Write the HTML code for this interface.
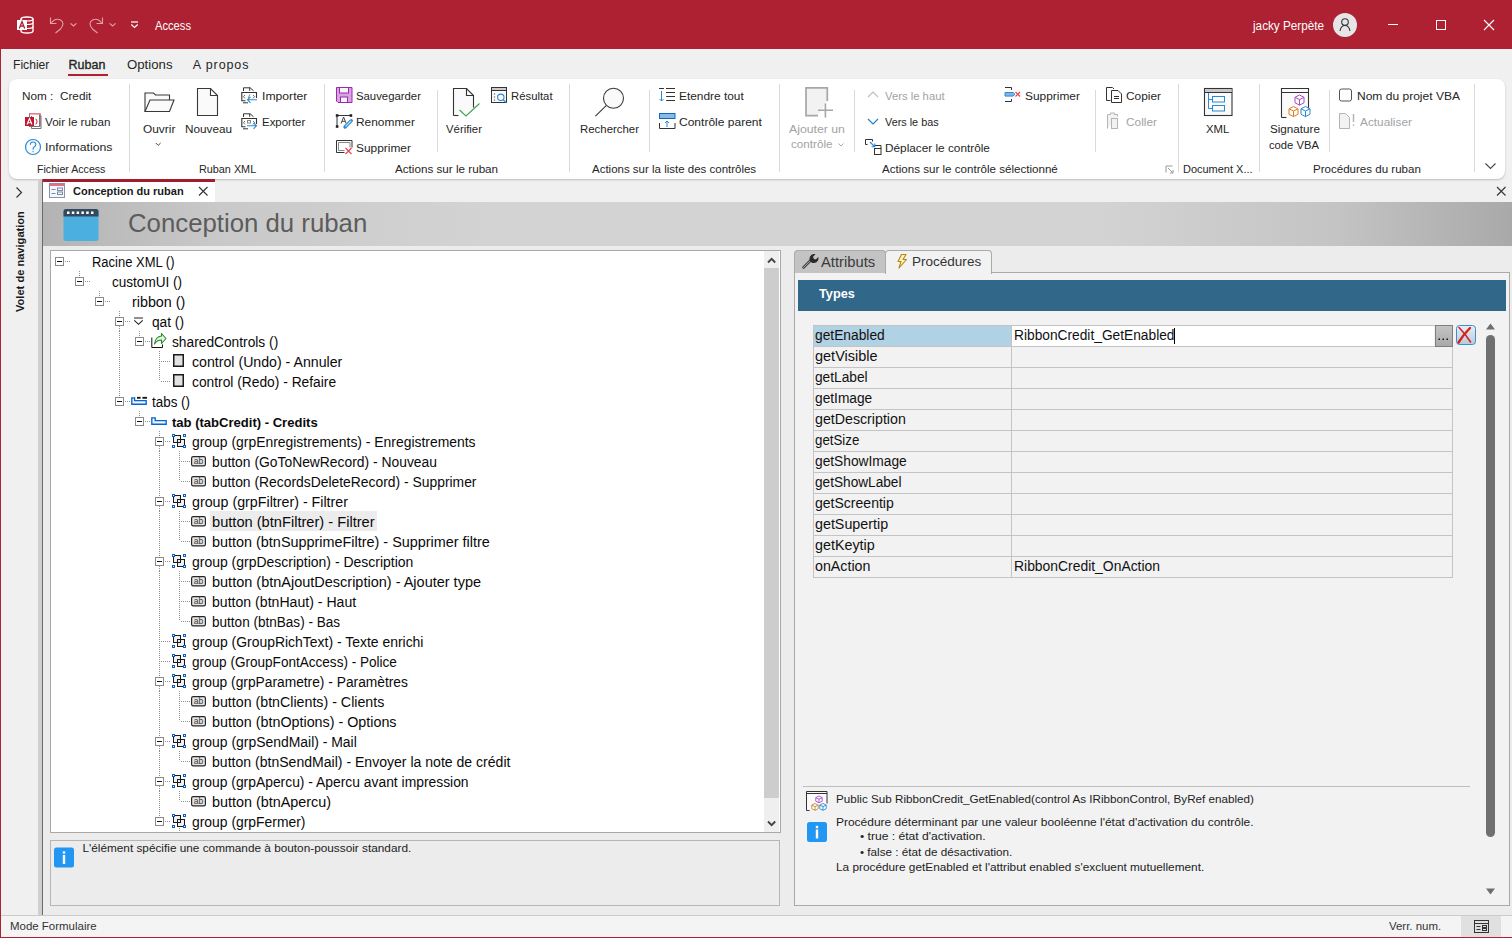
<!DOCTYPE html>
<html><head><meta charset="utf-8">
<style>
*{margin:0;padding:0;box-sizing:border-box}
html,body{width:1512px;height:938px;overflow:hidden;background:#f0f0f0;font-family:"Liberation Sans",sans-serif;color:#262626}
body{position:relative}
.a{position:absolute;white-space:nowrap;line-height:1}
svg{position:absolute;overflow:visible}
#title{left:0;top:0;width:1512px;height:49px;background:#ad2132}
.rt{font-size:12.5px;color:#262626;top:59px}
#ribbon{left:9px;top:79px;width:1496px;height:100px;background:#fff;border-radius:8px;box-shadow:0 1px 2px rgba(0,0,0,.22)}
.r{font-size:11.7px;color:#262626}
.gl{font-size:11.7px;color:#262626;top:162px}
.sep{position:absolute;width:1px;background:#dadada}
.dis{color:#a3a3a3}
.tr{position:absolute;font-size:14px;color:#0a0a0a;white-space:nowrap;line-height:1}
</style></head><body>
<!-- TITLE BAR -->
<div id="title" class="a"></div>
<div class="a" style="left:155px;top:19.5px;font-size:12px;color:#fff;transform:scaleX(0.931);transform-origin:0 0">Access</div>
<div class="a" style="left:1253px;top:19.5px;font-size:12px;color:#fff;transform:scaleX(0.977);transform-origin:0 0">jacky Perpète</div>
<div class="a" style="left:1333px;top:13px;width:24px;height:24px;border-radius:50%;background:#e6e6e6"></div>
<div class="a" style="left:1388px;top:24px;width:10px;height:1px;background:#fff"></div>
<div class="a" style="left:1436px;top:20px;width:10px;height:10px;border:1px solid #fff"></div>
<!-- left red border & bottom -->
<div class="a" style="left:0;top:49px;width:1px;height:889px;background:#ad2132"></div>
<div class="a" style="left:0;top:937px;width:1512px;height:1px;background:#ad2132"></div>
<!-- TABS -->
<div class="a rt" style="left:13px;transform:scaleX(.97);transform-origin:0 0">Fichier</div>
<div class="a rt" style="left:68.5px;transform:scaleX(1.0);transform-origin:0 0;-webkit-text-stroke:.35px #262626">Ruban</div>
<div class="a" style="left:68px;top:74px;width:40px;height:2px;background:#ad2132"></div>
<div class="a rt" style="left:127.3px;transform:scaleX(1.056);transform-origin:0 0">Options</div>
<div class="a rt" style="left:192.8px;letter-spacing:.9px">A propos</div>
<!-- RIBBON -->
<div id="ribbon" class="a"></div>
<!--RTEXT-->
<div class="a r " style="left:21.5px;top:89.9px;transform:scaleX(1.007);transform-origin:0 0">Nom :&nbsp; Credit</div>
<div class="a r " style="left:44.8px;top:115.8px;transform:scaleX(0.997);transform-origin:0 0">Voir le ruban</div>
<div class="a r " style="left:45.4px;top:141.4px;transform:scaleX(1.049);transform-origin:0 0">Informations</div>
<div class="a r " style="left:36.7px;top:162.5px;transform:scaleX(0.908);transform-origin:0 0">Fichier Access</div>
<div class="a r " style="left:142.6px;top:122.6px;transform:scaleX(1.017);transform-origin:0 0">Ouvrir</div>
<div class="a r " style="left:184.5px;top:122.6px;transform:scaleX(1.006);transform-origin:0 0">Nouveau</div>
<div class="a r " style="left:261.6px;top:89.9px;transform:scaleX(1.042);transform-origin:0 0">Importer</div>
<div class="a r " style="left:261.6px;top:115.7px;transform:scaleX(0.979);transform-origin:0 0">Exporter</div>
<div class="a r " style="left:198.5px;top:162.7px;transform:scaleX(0.926);transform-origin:0 0">Ruban XML</div>
<div class="a r " style="left:356px;top:90.1px;transform:scaleX(0.970);transform-origin:0 0">Sauvegarder</div>
<div class="a r " style="left:356px;top:116.1px;transform:scaleX(1.020);transform-origin:0 0">Renommer</div>
<div class="a r " style="left:356px;top:142.1px;transform:scaleX(1.019);transform-origin:0 0">Supprimer</div>
<div class="a r " style="left:446px;top:122.6px;transform:scaleX(0.971);transform-origin:0 0">Vérifier</div>
<div class="a r " style="left:511px;top:90.1px;transform:scaleX(0.969);transform-origin:0 0">Résultat</div>
<div class="a r " style="left:394.7px;top:162.5px;transform:scaleX(0.998);transform-origin:0 0">Actions sur le ruban</div>
<div class="a r " style="left:580px;top:122.6px;transform:scaleX(0.976);transform-origin:0 0">Rechercher</div>
<div class="a r " style="left:679px;top:89.9px;transform:scaleX(1.017);transform-origin:0 0">Etendre tout</div>
<div class="a r " style="left:679px;top:115.7px;transform:scaleX(1.029);transform-origin:0 0">Contrôle parent</div>
<div class="a r " style="left:592.3px;top:162.5px;transform:scaleX(0.983);transform-origin:0 0">Actions sur la liste des contrôles</div>
<div class="a r dis" style="left:789px;top:122.6px;transform:scaleX(1.050);transform-origin:0 0">Ajouter un</div>
<div class="a r dis" style="left:790.5px;top:138.3px;transform:scaleX(0.997);transform-origin:0 0">contrôle</div>
<div class="a r dis" style="left:885px;top:90.1px;transform:scaleX(0.965);transform-origin:0 0">Vers le haut</div>
<div class="a r " style="left:885px;top:115.7px;transform:scaleX(0.928);transform-origin:0 0">Vers le bas</div>
<div class="a r " style="left:885px;top:142.1px;transform:scaleX(1.009);transform-origin:0 0">Déplacer le contrôle</div>
<div class="a r " style="left:1025px;top:90.1px;transform:scaleX(1.019);transform-origin:0 0">Supprimer</div>
<div class="a r " style="left:882px;top:162.5px;transform:scaleX(0.991);transform-origin:0 0">Actions sur le contrôle sélectionné</div>
<div class="a r " style="left:1126px;top:90.1px;transform:scaleX(1.016);transform-origin:0 0">Copier</div>
<div class="a r dis" style="left:1126px;top:116.1px;transform:scaleX(1.014);transform-origin:0 0">Coller</div>
<div class="a r " style="left:1205.7px;top:123.0px;transform:scaleX(0.969);transform-origin:0 0">XML</div>
<div class="a r " style="left:1183.4px;top:162.5px;transform:scaleX(0.939);transform-origin:0 0">Document X...</div>
<div class="a r " style="left:1270px;top:123.0px;transform:scaleX(0.998);transform-origin:0 0">Signature</div>
<div class="a r " style="left:1269.4px;top:138.7px;transform:scaleX(0.961);transform-origin:0 0">code VBA</div>
<div class="a r " style="left:1357px;top:90.1px;transform:scaleX(1.029);transform-origin:0 0">Nom du projet VBA</div>
<div class="a r dis" style="left:1360px;top:116.1px;transform:scaleX(1.012);transform-origin:0 0">Actualiser</div>
<div class="a r " style="left:1312.9px;top:162.5px;transform:scaleX(0.988);transform-origin:0 0">Procédures du ruban</div>
<div class="sep" style="left:129px;top:84px;height:88px"></div>
<div class="sep" style="left:324px;top:84px;height:88px"></div>
<div class="sep" style="left:437px;top:90px;height:62px"></div>
<div class="sep" style="left:569px;top:84px;height:88px"></div>
<div class="sep" style="left:649px;top:90px;height:62px"></div>
<div class="sep" style="left:779px;top:84px;height:88px"></div>
<div class="sep" style="left:854px;top:90px;height:62px"></div>
<div class="sep" style="left:1095px;top:90px;height:62px"></div>
<div class="sep" style="left:1178px;top:84px;height:88px"></div>
<div class="sep" style="left:1259px;top:84px;height:88px"></div>
<div class="sep" style="left:1329px;top:90px;height:62px"></div>
<div class="sep" style="left:1474px;top:84px;height:88px"></div>
<!--/RTEXT-->
<svg style="left:0;top:0" width="1512" height="938" viewBox="0 0 1512 938">
<!-- title bar: access logo -->
<g>
 <path d="M21 19 v12 q0 2 6 2 q6 0 6-2 v-12 q0-2-6-2 q-6 0-6 2z" fill="none" stroke="#fff" stroke-width="1.4"/>
 <path d="M21 22.5 q0 2 6 2 q6 0 6-2 M21 26.5 q0 2 6 2 q6 0 6-2 M21 19 q0 2 6 2 q6 0 6-2" fill="none" stroke="#fff" stroke-width="1.2"/>
 <rect x="17" y="20" width="10" height="10" fill="#fff"/>
 <path d="M19.3 28.5 L22 21.5 L24.7 28.5 M20.4 26 h3.2" stroke="#ad2132" stroke-width="1.3" fill="none"/>
</g>
<!-- undo / redo -->
<g stroke="#e4a0aa" stroke-width="1.1" fill="none">
 <path d="M50.5 17.5 v6 h6"/>
 <path d="M51 23.5 q4-6 9.5-3.5 q5 3 0 9 l-5 4"/>
 <path d="M70.5 23.3 l3 2.7 l3-2.7"/>
 <path d="M102.5 17.5 v6 h-6"/>
 <path d="M102 23.5 q-4-6 -9.5-3.5 q-5 3 0 9 l5 4"/>
 <path d="M109.6 23.3 l3 2.7 l3-2.7"/>
</g>
<g stroke="#fff" stroke-width="1.2" fill="none">
 <path d="M131 22 h7"/>
 <path d="M131.3 24.5 l3.2 3 l3.2-3"/>
</g>
<!-- avatar person -->
<g stroke="#333" stroke-width="1.1" fill="none">
 <circle cx="1345" cy="22" r="3.3"/>
 <path d="M1340 31 q1-5.5 5-5.5 q4 0 5 5.5"/>
</g>
<!-- close X -->
<path d="M1484 20 l10 10 M1494 20 l-10 10" stroke="#fff" stroke-width="1.1"/>

<!-- Voir le ruban -->
<g>
 <path d="M31.5 113.5 h9 v13" fill="none" stroke="#e07b8b" stroke-width="1"/>
 <rect x="29.5" y="113.5" width="10" height="13" fill="#fff" stroke="#777" stroke-width="1"/>
 <path d="M31.5 116 v12.5 h9.5 v-13" fill="none" stroke="#777" stroke-width="1"/>
 <rect x="29.5" y="113" width="10.5" height="1.6" fill="#e57f8f"/>
 <rect x="25" y="117" width="9" height="9" fill="#c0182e"/>
 <path d="M27 124.5 l2.5-6 l2.5 6 M28 122.8 h3" stroke="#fff" stroke-width="1.1" fill="none"/>
 <path d="M35.5 119 q1.5 0 1.5 2.5 q0 2.5-1.5 2.5" stroke="#c0182e" stroke-width="1" fill="none"/>
</g>
<!-- Informations ? -->
<g>
 <circle cx="33" cy="147" r="7.5" fill="#fafafa" stroke="#2b8ad2" stroke-width="1.2"/>
 <path d="M30.3 144.8 q0-2.8 2.7-2.8 q2.8 0 2.8 2.6 q0 1.6-1.6 2.4 q-1.1 .6-1.1 2.2 v.6" fill="none" stroke="#2b8ad2" stroke-width="1.1"/>
 <circle cx="33.1" cy="151.6" r=".7" fill="#2b8ad2"/>
</g>
<!-- Folder Ouvrir -->
<g stroke="#383838" stroke-width="1.1" fill="#fafafa">
 <path d="M145 111.5 V93 h8.5 l2 2 h14 v5"/>
 <path d="M145 111.5 l5-11.5 h24 l-4.5 11.5 z"/>
</g>
<path d="M155.8 143 l2.4 2.4 l2.4-2.4" stroke="#444" stroke-width="1" fill="none"/>
<!-- Nouveau doc -->
<path d="M197.5 88.5 h13 l7 7 v20 h-20 z M210.5 88.5 v7 h7" fill="#fafafa" stroke="#383838" stroke-width="1.1"/>
<!-- Importer -->
<g transform="translate(0,0.00)">
 <path d="M243.5 91 V87.8 H250.2 L253.5 90.8 M249.7 87.8 V90.8" stroke="#333" stroke-width="1" fill="none"/>
 <path d="M245.5 100.8 H241.8 V92.5 H256.5 V98" stroke="#333" stroke-width="1.1" fill="none"/>
 <path d="M243 102.8 H248" stroke="#333" stroke-width="1" fill="none"/>
 <path d="M245 95 l-1.6 1.7 l1.6 1.7 M253 95 l1.6 1.7 l-1.6 1.7" stroke="#666" stroke-width="1" fill="none"/>
 <path d="M249.8 94.3 l-1.5 3.6" stroke="#888" stroke-width="1" fill="none"/>
 <path d="M257 99.8 H247.5 M250.5 96.8 l-3 3 l3 3" stroke="#2b8ad2" stroke-width="1.1" fill="none"/>
</g>
<!-- Exporter -->
<g transform="translate(0,26.00)">
 <path d="M243.5 91 V87.8 H250.2 L253.5 90.8 M249.7 87.8 V90.8" stroke="#333" stroke-width="1" fill="none"/>
 <path d="M245.5 100.8 H241.8 V92.5 H256.5 V98" stroke="#333" stroke-width="1.1" fill="none"/>
 <path d="M243 102.8 H248" stroke="#333" stroke-width="1" fill="none"/>
 <path d="M245 95 l-1.6 1.7 l1.6 1.7 M253 95 l1.6 1.7 l-1.6 1.7" stroke="#666" stroke-width="1" fill="none"/>
 <rect x="247.5" y="94.5" width="3" height="2.5" fill="none" stroke="#888" stroke-width="1"/>
 <path d="M247 99.8 H256.5 M253.5 96.8 l3 3 l-3 3" stroke="#2b8ad2" stroke-width="1.1" fill="none"/>
</g>
<!-- Sauvegarder floppy -->
<g>
 <path d="M336.5 87.5 h15.5 v15 h-14 l-1.5-1.5 z" fill="#d9a3e0" stroke="#9a2bb0" stroke-width="1"/>
 <rect x="339.5" y="87.5" width="9" height="5.5" fill="#f4f4f4" stroke="#9a2bb0" stroke-width="1"/>
 <rect x="340.5" y="97" width="7" height="5.5" fill="#f4f4f4" stroke="#9a2bb0" stroke-width="1"/>
</g>
<!-- Renommer -->
<g>
 <path d="M337 115.5 h14 M337 115.5 v11" stroke="#333" stroke-width="1" fill="none"/>
 <rect x="335.8" y="114.2" width="2.6" height="2.6" fill="#222"/><rect x="349.6" y="114.2" width="2.6" height="2.6" fill="#222"/><rect x="335.8" y="125.2" width="2.6" height="2.6" fill="#222"/>
 <path d="M341 123.5 L343.6 117 L346.2 123.5 M342 121.3 h3" stroke="#444" stroke-width="1" fill="none"/>
 <path d="M345 127 l6.3-6.3" stroke="#2b8ad2" stroke-width="3.3" stroke-linecap="round"/>
 <path d="M345.8 126.2 l5-5" stroke="#d6e8f8" stroke-width="1.1" stroke-linecap="round"/>
</g>
<!-- Supprimer (ruban) -->
<g stroke="#333" stroke-width="1" fill="none">
 <path d="M336.5 152.5 v-12 h15.5 v7 M336.5 152.5 h8"/>
 <path d="M338.5 150.5 v-8 h11.5 v5 M338.5 150.5 h6" stroke="#888"/>
</g>
<path d="M345.5 148 l6 6 M351.5 148 l-6 6" stroke="#e8404a" stroke-width="1.1"/>
<!-- Verifier -->
<g>
 <path d="M453.5 115.5 v-27 h13 l7 7 v12" fill="#fafafa" stroke="#333" stroke-width="1.1"/>
 <path d="M453.5 115.5 h5" stroke="#333" stroke-width="1.1"/>
 <path d="M466.5 88.5 v7 h7" fill="none" stroke="#333" stroke-width="1.1"/>
 <path d="M459.5 110 l6.5 6 l13.5-12.5" fill="none" stroke="#3ca44a" stroke-width="1.1"/>
</g>
<!-- Resultat -->
<g>
 <rect x="491.5" y="87.5" width="15" height="15" fill="#fafafa" stroke="#333" stroke-width="1"/>
 <rect x="492" y="88" width="14" height="2.5" fill="#ccc"/>
 <path d="M491.5 90.5 h15" stroke="#333" stroke-width="1"/>
 <path d="M494.5 93.5 v1 M494.5 96.5 v1 M494.5 99.5 v1" stroke="#444" stroke-width="1.2"/>
 <circle cx="500.8" cy="97.3" r="3.2" fill="#fafafa" stroke="#2b8ad2" stroke-width="1.1"/>
 <path d="M503 99.5 l3.5 3.5" stroke="#2b8ad2" stroke-width="1.1"/>
</g>
<!-- Rechercher magnifier -->
<g stroke="#3a3a3a" stroke-width="1.1">
 <circle cx="613.5" cy="98.2" r="10" fill="#fafafa"/>
 <path d="M606.2 105.6 l-10.8 10.6"/>
</g>
<!-- Etendre tout -->
<g stroke="#333" stroke-width="1" fill="none">
 <path d="M659 88.5 h5 M666 88.5 h9 M666 92.5 h9 M667 96.5 h8 M667 100.5 h8"/>
 <path d="M666 96.5 h.8 M666 100.5 h.8"/>
</g>
<g stroke="#2b8ad2" stroke-width="1" fill="none"><path d="M661.5 91 v10 M659.5 99 l2 2 l2-2"/></g>
<!-- Controle parent -->
<g>
 <rect x="659.5" y="113.5" width="15.5" height="5" fill="#88bce8" stroke="#1568b8" stroke-width="1"/>
 <path d="M659.5 123 v5.5 h15.5 v-5.5" fill="none" stroke="#333" stroke-width="1"/>
 <path d="M667 127 v-6 M665 123 l2-2 l2 2" stroke="#2b8ad2" stroke-width="1" fill="none"/>
</g>
<!-- Ajouter controle disabled -->
<g stroke="#a6a6a6" fill="none">
 <path d="M818 115.6 H806 V87.8 H827.3 V101" stroke-width="1.7" fill="#f2f2f2"/>
 <path d="M825.4 103.5 V117.6 M818 110.3 H833" stroke-width="1.6"/>
</g>
<path d="M838.5 143.5 l2.5 2.5 l2.5-2.5" stroke="#a6a6a6" stroke-width="1" fill="none"/>
<!-- chevrons vers le haut / bas -->
<path d="M868 97 l5-5 l5 5" stroke="#bdbdbd" stroke-width="1.1" fill="none"/>
<path d="M868 119 l5 5 l5-5" stroke="#1f7fd0" stroke-width="1.2" fill="none"/>
<!-- Deplacer -->
<g stroke="#333" stroke-width="1" fill="none">
 <path d="M865.5 139.5 h7 v2 M865.5 139.5 v5 h2"/>
 <rect x="874.5" y="148.5" width="6.5" height="6"/>
 <path d="M874.5 145.5 h6.5 v3"/>
</g>
<path d="M870 142 l4.5 4.5 M874.8 143.5 v3.2 h-3.2" stroke="#2b8ad2" stroke-width="1.1" fill="none"/>
<!-- Supprimer (controle) -->
<g>
 <path d="M1005 87.5 h6.5 v2.5 M1011.5 99 v2.5 h-6.5" stroke="#333" stroke-width="1" fill="none"/>
 <path d="M1005 92.5 h8 l2 1.8 l-2 1.8 h-8z" fill="#7fb6e6" stroke="#2b8ad2" stroke-width="1"/>
 <path d="M1015.5 92 l4.5 4.5 M1020 92 l-4.5 4.5" stroke="#e8404a" stroke-width="1.1"/>
</g>
<!-- Copier -->
<g stroke="#333" stroke-width="1" fill="#fff">
 <path d="M1106.5 100.5 v-13 h6 l1.5 1.5"/>
 <path d="M1106.5 100.5 h4" />
 <path d="M1111.5 102.5 v-12 h6.5 l3.5 3.5 v8.5z"/>
 <path d="M1114 96.5 h5 M1114 98.5 h5" />
</g>
<!-- Coller disabled -->
<g stroke="#b4b4b4" stroke-width="1" fill="#f2f2f2">
 <path d="M1107.5 128.5 v-14 h3 v-1.5 h4 v1.5 h3 v2"/>
 <rect x="1111.5" y="118.5" width="6" height="10"/>
</g>
<!-- launcher -->
<g stroke="#9a9a9a" stroke-width="1" fill="none"><path d="M1166 172.5 v-6.5 h6.5 M1168 168 l5 5 M1173 170 v3 h-3"/></g>
<!-- XML icon -->
<g>
 <rect x="1204.5" y="88.5" width="27.5" height="27" fill="#fafafa" stroke="#333" stroke-width="1.1"/>
 <rect x="1205" y="89" width="26.5" height="3" fill="#c8c8c8"/>
 <path d="M1204.5 92.5 h27.5" stroke="#333" stroke-width="1"/>
 <path d="M1208.5 93 v15.5 h4 M1208.5 99.5 h4" stroke="#2b8ad2" stroke-width="1" fill="none"/>
 <rect x="1212.5" y="96.5" width="12" height="5.5" fill="none" stroke="#2b8ad2" stroke-width="1"/>
 <rect x="1212.5" y="105.5" width="12" height="5.5" fill="none" stroke="#2b8ad2" stroke-width="1"/>
</g>
<!-- Signature icon -->
<g>
 <path d="M1281.5 117.5 v-29 h27 v23" fill="#fafafa" stroke="#333" stroke-width="1.1"/>
 <path d="M1281.5 92.5 h27" stroke="#333" stroke-width="1"/>
 <path d="M1281.5 117.5 h5" stroke="#333" stroke-width="1.1"/>
 <g fill="#fff" stroke-width="1">
  <path d="M1299.5 95 l4.5 2.3 v5.5 l-4.5 2.3 l-4.5-2.3 v-5.5z M1295 97.3 l4.5 2.3 l4.5-2.3 M1299.5 99.6 v5.5" stroke="#a64bc7"/>
  <path d="M1293.5 106.5 l4.5 2.3 v5.5 l-4.5 2.3 l-4.5-2.3 v-5.5z M1289 108.8 l4.5 2.3 l4.5-2.3 M1293.5 111.1 v5.5" stroke="#e07b1a"/>
  <path d="M1305.5 106.5 l4.5 2.3 v5.5 l-4.5 2.3 l-4.5-2.3 v-5.5z M1301 108.8 l4.5 2.3 l4.5-2.3 M1305.5 111.1 v5.5" stroke="#2b8ad2"/>
 </g>
</g>
<!-- checkbox -->
<rect x="1339.5" y="89" width="12" height="12" rx="2" fill="#fff" stroke="#555" stroke-width="1"/>
<!-- Actualiser disabled -->
<g stroke="#b4b4b4" stroke-width="1" fill="#f2f2f2">
 <path d="M1339.5 128.5 v-15 h6 l4 4 v11z"/>
 <path d="M1353.5 114 v8 M1353.5 124.5 v1.5" stroke-width="1.5"/>
</g>
<!-- collapse chevron -->
<path d="M1485.5 163.5 l5 5 l5-5" stroke="#444" stroke-width="1.1" fill="none"/>
</svg>

<!-- NAV PANE -->
<div class="a" style="left:38px;top:179px;width:4px;height:736px;background:#cfcfcf"></div>
<div class="a" style="left:42px;top:179px;width:1px;height:736px;background:#6a6a6a"></div>
<svg style="left:0;top:0" width="60" height="340"><path d="M16.5 187.5 l5 5 l-5 5" stroke="#333" stroke-width="1.2" fill="none"/></svg>
<div class="a" style="left:14.5px;top:312px;transform-origin:0 0;transform:rotate(-90deg);font-size:11.1px;font-weight:bold;color:#1a1a1a">Volet de navigation</div>
<!-- DOC TAB -->
<div class="a" style="left:43px;top:179px;width:172px;height:24px;background:#fff"></div>
<div class="a" style="left:43px;top:179px;width:172px;height:3px;background:#a51d2d"></div>
<div class="a" style="left:73px;top:185.5px;font-size:11px;font-weight:bold;color:#1a1a1a">Conception du ruban</div>
<svg style="left:0;top:0" width="220" height="220">
 <rect x="49.5" y="183.5" width="15" height="14" fill="#f4f6fa" stroke="#8a94a8" stroke-width="1"/>
 <rect x="50" y="184" width="14" height="2" fill="#e0708a"/>
 <path d="M51.5 189.5 h4 M51.5 193.5 h4" stroke="#7a8aa8" stroke-width="1"/>
 <rect x="57.5" y="188" width="5" height="2.5" fill="none" stroke="#7a8aa8" stroke-width="1"/>
 <rect x="57.5" y="192" width="5" height="2.5" fill="none" stroke="#7a8aa8" stroke-width="1"/>
 <path d="M199 187 l8.5 8.5 M207.5 187 l-8.5 8.5" stroke="#333" stroke-width="1.1"/>
</svg>
<svg style="left:0;top:0" width="1512" height="220"><path d="M1497 187 l8.5 8.5 M1505.5 187 l-8.5 8.5" stroke="#333" stroke-width="1.1"/></svg>
<!-- HEADER BAND -->
<div class="a" style="left:43px;top:202px;width:1469px;height:44px;background:linear-gradient(90deg,#b3b3b3 0%,#c9c9c9 12%,#d3d3d3 30%,#d3d3d3 72%,#c4c4c4 88%,#a9a9a9 100%)"></div>
<svg style="left:0;top:0" width="120" height="260">
 <rect x="63.5" y="209" width="35" height="32" rx="2.5" fill="#4bb0e0"/>
 <path d="M63.5 216.5 v-5 q0-2.5 2.5-2.5 h30 q2.5 0 2.5 2.5 v5z" fill="#34495e"/>
 <g fill="#fff"><rect x="67" y="211.5" width="2.5" height="2.5"/><rect x="71.8" y="211.5" width="2.5" height="2.5"/><rect x="76.6" y="211.5" width="2.5" height="2.5"/><rect x="81.4" y="211.5" width="2.5" height="2.5"/><rect x="86.2" y="211.5" width="2.5" height="2.5"/><rect x="91" y="211.5" width="2.5" height="2.5"/></g>
</svg>
<div class="a" style="left:127.5px;top:210.8px;font-size:25.8px;color:#5c5c5c;transform:scaleX(0.999);transform-origin:0 0">Conception du ruban</div>
<!-- TREE BOX -->
<div class="a" style="left:43px;top:246px;width:1469px;height:669px;background:#ececec"></div>
<div class="a" style="left:50px;top:250px;width:731px;height:583px;background:#fff;border:1px solid #a8a8a8"></div>
<!--TREE-->
<div class="a" style="left:210px;top:511px;width:167px;height:20px;background:#ececec"></div>
<svg style="left:0;top:0" width="800" height="840"><defs><clipPath id="tc"><rect x="51" y="251" width="712" height="581"/></clipPath></defs><g clip-path="url(#tc)"><path d="M79.5 271 V277" stroke="#8e8e8e" stroke-width="1" stroke-dasharray="1,1"/>
<path d="M99.5 291 V297" stroke="#8e8e8e" stroke-width="1" stroke-dasharray="1,1"/>
<path d="M119.5 311 V317" stroke="#8e8e8e" stroke-width="1" stroke-dasharray="1,1"/>
<path d="M119.5 326 V331" stroke="#8e8e8e" stroke-width="1" stroke-dasharray="1,1"/>
<path d="M139.5 331 V337" stroke="#8e8e8e" stroke-width="1" stroke-dasharray="1,1"/>
<path d="M159.5 351 V371" stroke="#8e8e8e" stroke-width="1" stroke-dasharray="1,1"/>
<path d="M159.5 371 V381" stroke="#8e8e8e" stroke-width="1" stroke-dasharray="1,1"/>
<path d="M119.5 391 V397" stroke="#8e8e8e" stroke-width="1" stroke-dasharray="1,1"/>
<path d="M139.5 411 V417" stroke="#8e8e8e" stroke-width="1" stroke-dasharray="1,1"/>
<path d="M159.5 431 V437" stroke="#8e8e8e" stroke-width="1" stroke-dasharray="1,1"/>
<path d="M159.5 446 V451" stroke="#8e8e8e" stroke-width="1" stroke-dasharray="1,1"/>
<path d="M179.5 451 V471" stroke="#8e8e8e" stroke-width="1" stroke-dasharray="1,1"/>
<path d="M179.5 471 V481" stroke="#8e8e8e" stroke-width="1" stroke-dasharray="1,1"/>
<path d="M159.5 491 V497" stroke="#8e8e8e" stroke-width="1" stroke-dasharray="1,1"/>
<path d="M159.5 506 V511" stroke="#8e8e8e" stroke-width="1" stroke-dasharray="1,1"/>
<path d="M179.5 511 V531" stroke="#8e8e8e" stroke-width="1" stroke-dasharray="1,1"/>
<path d="M179.5 531 V541" stroke="#8e8e8e" stroke-width="1" stroke-dasharray="1,1"/>
<path d="M159.5 551 V557" stroke="#8e8e8e" stroke-width="1" stroke-dasharray="1,1"/>
<path d="M159.5 566 V571" stroke="#8e8e8e" stroke-width="1" stroke-dasharray="1,1"/>
<path d="M179.5 571 V591" stroke="#8e8e8e" stroke-width="1" stroke-dasharray="1,1"/>
<path d="M179.5 591 V611" stroke="#8e8e8e" stroke-width="1" stroke-dasharray="1,1"/>
<path d="M179.5 611 V621" stroke="#8e8e8e" stroke-width="1" stroke-dasharray="1,1"/>
<path d="M159.5 631 V651" stroke="#8e8e8e" stroke-width="1" stroke-dasharray="1,1"/>
<path d="M159.5 651 V671" stroke="#8e8e8e" stroke-width="1" stroke-dasharray="1,1"/>
<path d="M159.5 671 V677" stroke="#8e8e8e" stroke-width="1" stroke-dasharray="1,1"/>
<path d="M159.5 686 V691" stroke="#8e8e8e" stroke-width="1" stroke-dasharray="1,1"/>
<path d="M179.5 691 V711" stroke="#8e8e8e" stroke-width="1" stroke-dasharray="1,1"/>
<path d="M179.5 711 V721" stroke="#8e8e8e" stroke-width="1" stroke-dasharray="1,1"/>
<path d="M159.5 731 V737" stroke="#8e8e8e" stroke-width="1" stroke-dasharray="1,1"/>
<path d="M159.5 746 V751" stroke="#8e8e8e" stroke-width="1" stroke-dasharray="1,1"/>
<path d="M179.5 751 V761" stroke="#8e8e8e" stroke-width="1" stroke-dasharray="1,1"/>
<path d="M159.5 771 V777" stroke="#8e8e8e" stroke-width="1" stroke-dasharray="1,1"/>
<path d="M159.5 786 V791" stroke="#8e8e8e" stroke-width="1" stroke-dasharray="1,1"/>
<path d="M179.5 791 V801" stroke="#8e8e8e" stroke-width="1" stroke-dasharray="1,1"/>
<path d="M159.5 811 V817" stroke="#8e8e8e" stroke-width="1" stroke-dasharray="1,1"/>
<path d="M179.5 826 V831" stroke="#8e8e8e" stroke-width="1" stroke-dasharray="1,1"/>
<path d="M119.5 331 V351" stroke="#8e8e8e" stroke-width="1" stroke-dasharray="1,1"/>
<path d="M119.5 351 V371" stroke="#8e8e8e" stroke-width="1" stroke-dasharray="1,1"/>
<path d="M119.5 371 V391" stroke="#8e8e8e" stroke-width="1" stroke-dasharray="1,1"/>
<path d="M159.5 451 V471" stroke="#8e8e8e" stroke-width="1" stroke-dasharray="1,1"/>
<path d="M159.5 471 V491" stroke="#8e8e8e" stroke-width="1" stroke-dasharray="1,1"/>
<path d="M159.5 511 V531" stroke="#8e8e8e" stroke-width="1" stroke-dasharray="1,1"/>
<path d="M159.5 531 V551" stroke="#8e8e8e" stroke-width="1" stroke-dasharray="1,1"/>
<path d="M159.5 571 V591" stroke="#8e8e8e" stroke-width="1" stroke-dasharray="1,1"/>
<path d="M159.5 591 V611" stroke="#8e8e8e" stroke-width="1" stroke-dasharray="1,1"/>
<path d="M159.5 611 V631" stroke="#8e8e8e" stroke-width="1" stroke-dasharray="1,1"/>
<path d="M159.5 691 V711" stroke="#8e8e8e" stroke-width="1" stroke-dasharray="1,1"/>
<path d="M159.5 711 V731" stroke="#8e8e8e" stroke-width="1" stroke-dasharray="1,1"/>
<path d="M159.5 751 V771" stroke="#8e8e8e" stroke-width="1" stroke-dasharray="1,1"/>
<path d="M159.5 791 V811" stroke="#8e8e8e" stroke-width="1" stroke-dasharray="1,1"/>
<rect x="55.5" y="257.5" width="8" height="8" fill="#fff" stroke="#8a8a8a" stroke-width="1"/>
<path d="M57 261.5 h5" stroke="#111" stroke-width="1"/>
<path d="M65 261.5 H71" stroke="#8e8e8e" stroke-width="1" stroke-dasharray="1,1"/>
<rect x="75.5" y="277.5" width="8" height="8" fill="#fff" stroke="#8a8a8a" stroke-width="1"/>
<path d="M77 281.5 h5" stroke="#111" stroke-width="1"/>
<path d="M85 281.5 H91" stroke="#8e8e8e" stroke-width="1" stroke-dasharray="1,1"/>
<rect x="95.5" y="297.5" width="8" height="8" fill="#fff" stroke="#8a8a8a" stroke-width="1"/>
<path d="M97 301.5 h5" stroke="#111" stroke-width="1"/>
<path d="M105 301.5 H111" stroke="#8e8e8e" stroke-width="1" stroke-dasharray="1,1"/>
<rect x="115.5" y="317.5" width="8" height="8" fill="#fff" stroke="#8a8a8a" stroke-width="1"/>
<path d="M117 321.5 h5" stroke="#111" stroke-width="1"/>
<path d="M125 321.5 H131" stroke="#8e8e8e" stroke-width="1" stroke-dasharray="1,1"/>
<path d="M134 318.0 h9 M134.3 320.3 l4.2 4 l4.2-4" stroke="#222" stroke-width="1.1" fill="none"/>
<rect x="135.5" y="337.5" width="8" height="8" fill="#fff" stroke="#8a8a8a" stroke-width="1"/>
<path d="M137 341.5 h5" stroke="#111" stroke-width="1"/>
<path d="M145 341.5 H151" stroke="#8e8e8e" stroke-width="1" stroke-dasharray="1,1"/>
<path d="M151.8 337.5 V347.5 H162.5 V344.5" stroke="#111" stroke-width="1" fill="none"/>
<path d="M154.5 344.0 Q155.5 336.5 161.5 336.0 V333.5 L166 338.5 L161.5 343.5 V340.0 Q157 340.0 154.5 344.0 Z" fill="#e6f2e6" stroke="#228a22" stroke-width="1.1" stroke-linejoin="round"/>
<path d="M161.0 361.5 H170.0" stroke="#8e8e8e" stroke-width="1" stroke-dasharray="1,1"/>
<rect x="173.75" y="354.75" width="9.5" height="11.5" fill="#e2e2e2" stroke="#1a1a1a" stroke-width="1.5"/>
<path d="M161.0 381.5 H170.0" stroke="#8e8e8e" stroke-width="1" stroke-dasharray="1,1"/>
<rect x="173.75" y="374.75" width="9.5" height="11.5" fill="#e2e2e2" stroke="#1a1a1a" stroke-width="1.5"/>
<rect x="115.5" y="397.5" width="8" height="8" fill="#fff" stroke="#8a8a8a" stroke-width="1"/>
<path d="M117 401.5 h5" stroke="#111" stroke-width="1"/>
<path d="M125 401.5 H131" stroke="#8e8e8e" stroke-width="1" stroke-dasharray="1,1"/>
<path d="M131.8 397.8 H134.6 V400.6 H146.2 V404.2 H131.8 Z" fill="#eef4fb" stroke="#0a64cc" stroke-width="1.35"/>
<rect x="137" y="396.9" width="3.6" height="1.8" fill="#111"/><rect x="142.4" y="396.9" width="4.6" height="1.8" fill="#111"/>
<rect x="135.5" y="417.5" width="8" height="8" fill="#fff" stroke="#8a8a8a" stroke-width="1"/>
<path d="M137 421.5 h5" stroke="#111" stroke-width="1"/>
<path d="M145 421.5 H151" stroke="#8e8e8e" stroke-width="1" stroke-dasharray="1,1"/>
<path d="M151.8 417.8 H155.2 V420.6 H166.2 V424.2 H151.8 Z" fill="#eef4fb" stroke="#0a64cc" stroke-width="1.35"/>
<rect x="155.5" y="437.5" width="8" height="8" fill="#fff" stroke="#8a8a8a" stroke-width="1"/>
<path d="M157 441.5 h5" stroke="#111" stroke-width="1"/>
<path d="M165 441.5 H171" stroke="#8e8e8e" stroke-width="1" stroke-dasharray="1,1"/>
<rect x="173.5" y="435.5" width="7" height="7" fill="#efefef" stroke="none"/>
<rect x="177.5" y="439.5" width="7" height="7" fill="#efefef" stroke="none"/>
<rect x="173.5" y="435.5" width="7" height="7" fill="none" stroke="#1a1a1a" stroke-width="1"/>
<rect x="177.5" y="439.5" width="7" height="7" fill="none" stroke="#1a1a1a" stroke-width="1"/>
<rect x="172.5" y="434.5" width="2" height="2" fill="#fff" stroke="#0a5cc8" stroke-width="1"/>
<rect x="183.5" y="434.5" width="2" height="2" fill="#fff" stroke="#0a5cc8" stroke-width="1"/>
<rect x="172.5" y="445.5" width="2" height="2" fill="#fff" stroke="#0a5cc8" stroke-width="1"/>
<rect x="183.5" y="445.5" width="2" height="2" fill="#fff" stroke="#0a5cc8" stroke-width="1"/>
<path d="M181.0 461.5 H190.0" stroke="#8e8e8e" stroke-width="1" stroke-dasharray="1,1"/>
<rect x="191.6" y="456.6" width="13.8" height="9.3" rx="1.6" fill="#e8e8e8" stroke="#262626" stroke-width="1.2"/>
<text x="198.6" y="464.1" font-family="Liberation Sans" font-size="8.5" fill="#333" text-anchor="middle">ab</text>
<path d="M181.0 481.5 H190.0" stroke="#8e8e8e" stroke-width="1" stroke-dasharray="1,1"/>
<rect x="191.6" y="476.6" width="13.8" height="9.3" rx="1.6" fill="#e8e8e8" stroke="#262626" stroke-width="1.2"/>
<text x="198.6" y="484.1" font-family="Liberation Sans" font-size="8.5" fill="#333" text-anchor="middle">ab</text>
<rect x="155.5" y="497.5" width="8" height="8" fill="#fff" stroke="#8a8a8a" stroke-width="1"/>
<path d="M157 501.5 h5" stroke="#111" stroke-width="1"/>
<path d="M165 501.5 H171" stroke="#8e8e8e" stroke-width="1" stroke-dasharray="1,1"/>
<rect x="173.5" y="495.5" width="7" height="7" fill="#efefef" stroke="none"/>
<rect x="177.5" y="499.5" width="7" height="7" fill="#efefef" stroke="none"/>
<rect x="173.5" y="495.5" width="7" height="7" fill="none" stroke="#1a1a1a" stroke-width="1"/>
<rect x="177.5" y="499.5" width="7" height="7" fill="none" stroke="#1a1a1a" stroke-width="1"/>
<rect x="172.5" y="494.5" width="2" height="2" fill="#fff" stroke="#0a5cc8" stroke-width="1"/>
<rect x="183.5" y="494.5" width="2" height="2" fill="#fff" stroke="#0a5cc8" stroke-width="1"/>
<rect x="172.5" y="505.5" width="2" height="2" fill="#fff" stroke="#0a5cc8" stroke-width="1"/>
<rect x="183.5" y="505.5" width="2" height="2" fill="#fff" stroke="#0a5cc8" stroke-width="1"/>
<path d="M181.0 521.5 H190.0" stroke="#8e8e8e" stroke-width="1" stroke-dasharray="1,1"/>
<rect x="191.6" y="516.6" width="13.8" height="9.3" rx="1.6" fill="#e8e8e8" stroke="#262626" stroke-width="1.2"/>
<text x="198.6" y="524.1" font-family="Liberation Sans" font-size="8.5" fill="#333" text-anchor="middle">ab</text>
<path d="M181.0 541.5 H190.0" stroke="#8e8e8e" stroke-width="1" stroke-dasharray="1,1"/>
<rect x="191.6" y="536.6" width="13.8" height="9.3" rx="1.6" fill="#e8e8e8" stroke="#262626" stroke-width="1.2"/>
<text x="198.6" y="544.1" font-family="Liberation Sans" font-size="8.5" fill="#333" text-anchor="middle">ab</text>
<rect x="155.5" y="557.5" width="8" height="8" fill="#fff" stroke="#8a8a8a" stroke-width="1"/>
<path d="M157 561.5 h5" stroke="#111" stroke-width="1"/>
<path d="M165 561.5 H171" stroke="#8e8e8e" stroke-width="1" stroke-dasharray="1,1"/>
<rect x="173.5" y="555.5" width="7" height="7" fill="#efefef" stroke="none"/>
<rect x="177.5" y="559.5" width="7" height="7" fill="#efefef" stroke="none"/>
<rect x="173.5" y="555.5" width="7" height="7" fill="none" stroke="#1a1a1a" stroke-width="1"/>
<rect x="177.5" y="559.5" width="7" height="7" fill="none" stroke="#1a1a1a" stroke-width="1"/>
<rect x="172.5" y="554.5" width="2" height="2" fill="#fff" stroke="#0a5cc8" stroke-width="1"/>
<rect x="183.5" y="554.5" width="2" height="2" fill="#fff" stroke="#0a5cc8" stroke-width="1"/>
<rect x="172.5" y="565.5" width="2" height="2" fill="#fff" stroke="#0a5cc8" stroke-width="1"/>
<rect x="183.5" y="565.5" width="2" height="2" fill="#fff" stroke="#0a5cc8" stroke-width="1"/>
<path d="M181.0 581.5 H190.0" stroke="#8e8e8e" stroke-width="1" stroke-dasharray="1,1"/>
<rect x="191.6" y="576.6" width="13.8" height="9.3" rx="1.6" fill="#e8e8e8" stroke="#262626" stroke-width="1.2"/>
<text x="198.6" y="584.1" font-family="Liberation Sans" font-size="8.5" fill="#333" text-anchor="middle">ab</text>
<path d="M181.0 601.5 H190.0" stroke="#8e8e8e" stroke-width="1" stroke-dasharray="1,1"/>
<rect x="191.6" y="596.6" width="13.8" height="9.3" rx="1.6" fill="#e8e8e8" stroke="#262626" stroke-width="1.2"/>
<text x="198.6" y="604.1" font-family="Liberation Sans" font-size="8.5" fill="#333" text-anchor="middle">ab</text>
<path d="M181.0 621.5 H190.0" stroke="#8e8e8e" stroke-width="1" stroke-dasharray="1,1"/>
<rect x="191.6" y="616.6" width="13.8" height="9.3" rx="1.6" fill="#e8e8e8" stroke="#262626" stroke-width="1.2"/>
<text x="198.6" y="624.1" font-family="Liberation Sans" font-size="8.5" fill="#333" text-anchor="middle">ab</text>
<path d="M161.0 641.5 H170.0" stroke="#8e8e8e" stroke-width="1" stroke-dasharray="1,1"/>
<rect x="173.5" y="635.5" width="7" height="7" fill="#efefef" stroke="none"/>
<rect x="177.5" y="639.5" width="7" height="7" fill="#efefef" stroke="none"/>
<rect x="173.5" y="635.5" width="7" height="7" fill="none" stroke="#1a1a1a" stroke-width="1"/>
<rect x="177.5" y="639.5" width="7" height="7" fill="none" stroke="#1a1a1a" stroke-width="1"/>
<rect x="172.5" y="634.5" width="2" height="2" fill="#fff" stroke="#0a5cc8" stroke-width="1"/>
<rect x="183.5" y="634.5" width="2" height="2" fill="#fff" stroke="#0a5cc8" stroke-width="1"/>
<rect x="172.5" y="645.5" width="2" height="2" fill="#fff" stroke="#0a5cc8" stroke-width="1"/>
<rect x="183.5" y="645.5" width="2" height="2" fill="#fff" stroke="#0a5cc8" stroke-width="1"/>
<path d="M161.0 661.5 H170.0" stroke="#8e8e8e" stroke-width="1" stroke-dasharray="1,1"/>
<rect x="173.5" y="655.5" width="7" height="7" fill="#efefef" stroke="none"/>
<rect x="177.5" y="659.5" width="7" height="7" fill="#efefef" stroke="none"/>
<rect x="173.5" y="655.5" width="7" height="7" fill="none" stroke="#1a1a1a" stroke-width="1"/>
<rect x="177.5" y="659.5" width="7" height="7" fill="none" stroke="#1a1a1a" stroke-width="1"/>
<rect x="172.5" y="654.5" width="2" height="2" fill="#fff" stroke="#0a5cc8" stroke-width="1"/>
<rect x="183.5" y="654.5" width="2" height="2" fill="#fff" stroke="#0a5cc8" stroke-width="1"/>
<rect x="172.5" y="665.5" width="2" height="2" fill="#fff" stroke="#0a5cc8" stroke-width="1"/>
<rect x="183.5" y="665.5" width="2" height="2" fill="#fff" stroke="#0a5cc8" stroke-width="1"/>
<rect x="155.5" y="677.5" width="8" height="8" fill="#fff" stroke="#8a8a8a" stroke-width="1"/>
<path d="M157 681.5 h5" stroke="#111" stroke-width="1"/>
<path d="M165 681.5 H171" stroke="#8e8e8e" stroke-width="1" stroke-dasharray="1,1"/>
<rect x="173.5" y="675.5" width="7" height="7" fill="#efefef" stroke="none"/>
<rect x="177.5" y="679.5" width="7" height="7" fill="#efefef" stroke="none"/>
<rect x="173.5" y="675.5" width="7" height="7" fill="none" stroke="#1a1a1a" stroke-width="1"/>
<rect x="177.5" y="679.5" width="7" height="7" fill="none" stroke="#1a1a1a" stroke-width="1"/>
<rect x="172.5" y="674.5" width="2" height="2" fill="#fff" stroke="#0a5cc8" stroke-width="1"/>
<rect x="183.5" y="674.5" width="2" height="2" fill="#fff" stroke="#0a5cc8" stroke-width="1"/>
<rect x="172.5" y="685.5" width="2" height="2" fill="#fff" stroke="#0a5cc8" stroke-width="1"/>
<rect x="183.5" y="685.5" width="2" height="2" fill="#fff" stroke="#0a5cc8" stroke-width="1"/>
<path d="M181.0 701.5 H190.0" stroke="#8e8e8e" stroke-width="1" stroke-dasharray="1,1"/>
<rect x="191.6" y="696.6" width="13.8" height="9.3" rx="1.6" fill="#e8e8e8" stroke="#262626" stroke-width="1.2"/>
<text x="198.6" y="704.1" font-family="Liberation Sans" font-size="8.5" fill="#333" text-anchor="middle">ab</text>
<path d="M181.0 721.5 H190.0" stroke="#8e8e8e" stroke-width="1" stroke-dasharray="1,1"/>
<rect x="191.6" y="716.6" width="13.8" height="9.3" rx="1.6" fill="#e8e8e8" stroke="#262626" stroke-width="1.2"/>
<text x="198.6" y="724.1" font-family="Liberation Sans" font-size="8.5" fill="#333" text-anchor="middle">ab</text>
<rect x="155.5" y="737.5" width="8" height="8" fill="#fff" stroke="#8a8a8a" stroke-width="1"/>
<path d="M157 741.5 h5" stroke="#111" stroke-width="1"/>
<path d="M165 741.5 H171" stroke="#8e8e8e" stroke-width="1" stroke-dasharray="1,1"/>
<rect x="173.5" y="735.5" width="7" height="7" fill="#efefef" stroke="none"/>
<rect x="177.5" y="739.5" width="7" height="7" fill="#efefef" stroke="none"/>
<rect x="173.5" y="735.5" width="7" height="7" fill="none" stroke="#1a1a1a" stroke-width="1"/>
<rect x="177.5" y="739.5" width="7" height="7" fill="none" stroke="#1a1a1a" stroke-width="1"/>
<rect x="172.5" y="734.5" width="2" height="2" fill="#fff" stroke="#0a5cc8" stroke-width="1"/>
<rect x="183.5" y="734.5" width="2" height="2" fill="#fff" stroke="#0a5cc8" stroke-width="1"/>
<rect x="172.5" y="745.5" width="2" height="2" fill="#fff" stroke="#0a5cc8" stroke-width="1"/>
<rect x="183.5" y="745.5" width="2" height="2" fill="#fff" stroke="#0a5cc8" stroke-width="1"/>
<path d="M181.0 761.5 H190.0" stroke="#8e8e8e" stroke-width="1" stroke-dasharray="1,1"/>
<rect x="191.6" y="756.6" width="13.8" height="9.3" rx="1.6" fill="#e8e8e8" stroke="#262626" stroke-width="1.2"/>
<text x="198.6" y="764.1" font-family="Liberation Sans" font-size="8.5" fill="#333" text-anchor="middle">ab</text>
<rect x="155.5" y="777.5" width="8" height="8" fill="#fff" stroke="#8a8a8a" stroke-width="1"/>
<path d="M157 781.5 h5" stroke="#111" stroke-width="1"/>
<path d="M165 781.5 H171" stroke="#8e8e8e" stroke-width="1" stroke-dasharray="1,1"/>
<rect x="173.5" y="775.5" width="7" height="7" fill="#efefef" stroke="none"/>
<rect x="177.5" y="779.5" width="7" height="7" fill="#efefef" stroke="none"/>
<rect x="173.5" y="775.5" width="7" height="7" fill="none" stroke="#1a1a1a" stroke-width="1"/>
<rect x="177.5" y="779.5" width="7" height="7" fill="none" stroke="#1a1a1a" stroke-width="1"/>
<rect x="172.5" y="774.5" width="2" height="2" fill="#fff" stroke="#0a5cc8" stroke-width="1"/>
<rect x="183.5" y="774.5" width="2" height="2" fill="#fff" stroke="#0a5cc8" stroke-width="1"/>
<rect x="172.5" y="785.5" width="2" height="2" fill="#fff" stroke="#0a5cc8" stroke-width="1"/>
<rect x="183.5" y="785.5" width="2" height="2" fill="#fff" stroke="#0a5cc8" stroke-width="1"/>
<path d="M181.0 801.5 H190.0" stroke="#8e8e8e" stroke-width="1" stroke-dasharray="1,1"/>
<rect x="191.6" y="796.6" width="13.8" height="9.3" rx="1.6" fill="#e8e8e8" stroke="#262626" stroke-width="1.2"/>
<text x="198.6" y="804.1" font-family="Liberation Sans" font-size="8.5" fill="#333" text-anchor="middle">ab</text>
<rect x="155.5" y="817.5" width="8" height="8" fill="#fff" stroke="#8a8a8a" stroke-width="1"/>
<path d="M157 821.5 h5" stroke="#111" stroke-width="1"/>
<path d="M165 821.5 H171" stroke="#8e8e8e" stroke-width="1" stroke-dasharray="1,1"/>
<rect x="173.5" y="815.5" width="7" height="7" fill="#efefef" stroke="none"/>
<rect x="177.5" y="819.5" width="7" height="7" fill="#efefef" stroke="none"/>
<rect x="173.5" y="815.5" width="7" height="7" fill="none" stroke="#1a1a1a" stroke-width="1"/>
<rect x="177.5" y="819.5" width="7" height="7" fill="none" stroke="#1a1a1a" stroke-width="1"/>
<rect x="172.5" y="814.5" width="2" height="2" fill="#fff" stroke="#0a5cc8" stroke-width="1"/>
<rect x="183.5" y="814.5" width="2" height="2" fill="#fff" stroke="#0a5cc8" stroke-width="1"/>
<rect x="172.5" y="825.5" width="2" height="2" fill="#fff" stroke="#0a5cc8" stroke-width="1"/>
<rect x="183.5" y="825.5" width="2" height="2" fill="#fff" stroke="#0a5cc8" stroke-width="1"/></g></svg>
<div class="tr" style="left:92px;top:254.8px;font-size:14px;transform:scaleX(0.927);transform-origin:0 0">Racine XML ()</div>
<div class="tr" style="left:112px;top:274.8px;font-size:14px;transform:scaleX(0.968);transform-origin:0 0">customUI ()</div>
<div class="tr" style="left:132px;top:294.8px;font-size:14px;transform:scaleX(1.022);transform-origin:0 0">ribbon ()</div>
<div class="tr" style="left:152px;top:314.8px;font-size:14px;transform:scaleX(0.979);transform-origin:0 0">qat ()</div>
<div class="tr" style="left:172px;top:334.8px;font-size:14px;transform:scaleX(0.982);transform-origin:0 0">sharedControls ()</div>
<div class="tr" style="left:192px;top:354.8px;font-size:14px;transform:scaleX(1.011);transform-origin:0 0">control (Undo) - Annuler</div>
<div class="tr" style="left:192px;top:374.8px;font-size:14px;transform:scaleX(0.985);transform-origin:0 0">control (Redo) - Refaire</div>
<div class="tr" style="left:152px;top:394.8px;font-size:14px;transform:scaleX(0.958);transform-origin:0 0">tabs ()</div>
<div class="tr" style="left:172px;top:415.6px;font-size:13.1px;font-weight:bold;transform:scaleX(0.996);transform-origin:0 0">tab (tabCredit) - Credits</div>
<div class="tr" style="left:192px;top:434.8px;font-size:14px;transform:scaleX(0.993);transform-origin:0 0">group (grpEnregistrements) - Enregistrements</div>
<div class="tr" style="left:212px;top:454.8px;font-size:14px;transform:scaleX(0.990);transform-origin:0 0">button (GoToNewRecord) - Nouveau</div>
<div class="tr" style="left:212px;top:474.8px;font-size:14px;transform:scaleX(0.991);transform-origin:0 0">button (RecordsDeleteRecord) - Supprimer</div>
<div class="tr" style="left:192px;top:494.8px;font-size:14px;transform:scaleX(1.018);transform-origin:0 0">group (grpFiltrer) - Filtrer</div>
<div class="tr" style="left:212px;top:514.8px;font-size:14px;transform:scaleX(1.045);transform-origin:0 0">button (btnFiltrer) - Filtrer</div>
<div class="tr" style="left:212px;top:534.8px;font-size:14px;transform:scaleX(1.029);transform-origin:0 0">button (btnSupprimeFiltre) - Supprimer filtre</div>
<div class="tr" style="left:192px;top:554.8px;font-size:14px;transform:scaleX(0.998);transform-origin:0 0">group (grpDescription) - Description</div>
<div class="tr" style="left:212px;top:574.8px;font-size:14px;transform:scaleX(1.035);transform-origin:0 0">button (btnAjoutDescription) - Ajouter type</div>
<div class="tr" style="left:212px;top:594.8px;font-size:14px;transform:scaleX(1.007);transform-origin:0 0">button (btnHaut) - Haut</div>
<div class="tr" style="left:212px;top:614.8px;font-size:14px;transform:scaleX(0.968);transform-origin:0 0">button (btnBas) - Bas</div>
<div class="tr" style="left:192px;top:634.8px;font-size:14px;transform:scaleX(0.996);transform-origin:0 0">group (GroupRichText) - Texte enrichi</div>
<div class="tr" style="left:192px;top:654.8px;font-size:14px;transform:scaleX(0.968);transform-origin:0 0">group (GroupFontAccess) - Police</div>
<div class="tr" style="left:192px;top:674.8px;font-size:14px;transform:scaleX(0.984);transform-origin:0 0">group (grpParametre) - Paramètres</div>
<div class="tr" style="left:212px;top:694.8px;font-size:14px;transform:scaleX(1.016);transform-origin:0 0">button (btnClients) - Clients</div>
<div class="tr" style="left:212px;top:714.8px;font-size:14px;transform:scaleX(1.022);transform-origin:0 0">button (btnOptions) - Options</div>
<div class="tr" style="left:192px;top:734.8px;font-size:14px;transform:scaleX(0.994);transform-origin:0 0">group (grpSendMail) - Mail</div>
<div class="tr" style="left:212px;top:754.8px;font-size:14px;transform:scaleX(1.004);transform-origin:0 0">button (btnSendMail) - Envoyer la note de crédit</div>
<div class="tr" style="left:192px;top:774.8px;font-size:14px;transform:scaleX(0.990);transform-origin:0 0">group (grpApercu) - Apercu avant impression</div>
<div class="tr" style="left:212px;top:794.8px;font-size:14px;transform:scaleX(1.027);transform-origin:0 0">button (btnApercu)</div>
<div class="tr" style="left:192px;top:814.8px;font-size:14px;transform:scaleX(0.992);transform-origin:0 0">group (grpFermer)</div>
<!--/TREE-->
<div class="a" style="left:764px;top:251px;width:15px;height:581px;background:#efefef"></div>
<div class="a" style="left:764px;top:268px;width:15px;height:530px;background:#cdcdcd"></div>
<svg style="left:0;top:0" width="800" height="840">
 <path d="M768 262.5 l3.6-3.6 l3.6 3.6" stroke="#444" stroke-width="1.9" fill="none"/>
 <path d="M768 821.5 l3.6 3.6 l3.6-3.6" stroke="#444" stroke-width="1.9" fill="none"/>
</svg>
<!-- INFO BOX -->
<div class="a" style="left:50px;top:840px;width:730px;height:66px;background:#ececec;border:1px solid #b6b6b6"></div>
<svg style="left:0;top:0" width="100" height="880">
 <rect x="54" y="847.5" width="20" height="20" rx="2.5" fill="#2196f3"/>
 <rect x="62.8" y="855" width="2.4" height="9" fill="#fff"/><rect x="62.8" y="851.3" width="2.4" height="2.4" fill="#fff"/>
</svg>
<div class="a" style="left:82.4px;top:843px;font-size:11.8px;color:#222;transform:scaleX(1.000);transform-origin:0 0">L'élément spécifie une commande à bouton-poussoir standard.</div>
<!--RIGHT-->
<div class="a" style="left:794px;top:272px;width:716px;height:634px;border:1px solid #a9a9a9;background:#f2f2f2"></div>
<div class="a" style="left:794px;top:250px;width:92px;height:23px;border:1px solid #a9a9a9;border-bottom:none;border-radius:4px 4px 0 0;background:#c3c3c3"></div>
<div class="a" style="left:885px;top:250px;width:107px;height:24px;border:1px solid #a9a9a9;border-bottom:none;border-radius:4px 4px 0 0;background:#f2f2f2"></div>
<div class="a" style="left:820.5px;top:254.8px;font-size:14px;color:#3a3a3a;transform:scaleX(1.055);transform-origin:0 0">Attributs</div>
<div class="a" style="left:911.8px;top:254.8px;font-size:13.4px;color:#333;transform:scaleX(1.010);transform-origin:0 0">Procédures</div>
<svg style="left:0;top:0" width="1000" height="300">
 <path d="M803.5 267.5 l8-8" stroke="#444" stroke-width="2.6" stroke-linecap="round"/>
 <path d="M803.5 267.5 l8-8" stroke="#bbb" stroke-width=".8" stroke-linecap="round"/>
 <path d="M810 261 q-1.5-4 1.5-6.2 q2-1.2 4-.6 l-2.5 2.6 l.8 2 l2 .8 l2.5-2.5 q.6 2-.6 4 q-2.2 3-6.2 1.5z" fill="#2a2a2a"/>
 <path d="M901.5 254.5 h4.5 l-3 5 h3.5 l-7.5 8.5 l2-6.5 h-3z" fill="#fff3c4" stroke="#b5870e" stroke-width="1.1" stroke-linejoin="round"/>
</svg>
<div class="a" style="left:798px;top:280px;width:708px;height:31px;background:#316789"></div>
<div class="a" style="left:819.2px;top:288px;font-size:12.8px;font-weight:bold;color:#fff;transform:scaleX(0.993);transform-origin:0 0">Types</div>
<div class="a" style="left:813px;top:325px;width:640px;height:253px;background:#f2f2f2;border:1px solid #c4c4c4"></div>
<div class="a" style="left:814px;top:326px;width:197px;height:20px;background:#b1d1e4"></div>
<div class="a" style="left:1012px;top:326px;width:422px;height:20px;background:#fff"></div>
<div class="a" style="left:814px;top:346px;width:638px;height:1px;background:#c4c4c4"></div>
<div class="a" style="left:814px;top:367px;width:638px;height:1px;background:#c4c4c4"></div>
<div class="a" style="left:814px;top:388px;width:638px;height:1px;background:#c4c4c4"></div>
<div class="a" style="left:814px;top:409px;width:638px;height:1px;background:#c4c4c4"></div>
<div class="a" style="left:814px;top:430px;width:638px;height:1px;background:#c4c4c4"></div>
<div class="a" style="left:814px;top:451px;width:638px;height:1px;background:#c4c4c4"></div>
<div class="a" style="left:814px;top:472px;width:638px;height:1px;background:#c4c4c4"></div>
<div class="a" style="left:814px;top:493px;width:638px;height:1px;background:#c4c4c4"></div>
<div class="a" style="left:814px;top:514px;width:638px;height:1px;background:#c4c4c4"></div>
<div class="a" style="left:814px;top:535px;width:638px;height:1px;background:#c4c4c4"></div>
<div class="a" style="left:814px;top:556px;width:638px;height:1px;background:#c4c4c4"></div>
<div class="a" style="left:1011px;top:326px;width:1px;height:251px;background:#c4c4c4"></div>
<div class="a" style="left:815px;top:328.8px;font-size:13.85px;color:#111;transform:scaleX(0.996);transform-origin:0 0">getEnabled</div>
<div class="a" style="left:1013.6px;top:328.8px;font-size:13.85px;color:#111;transform:scaleX(0.993);transform-origin:0 0">RibbonCredit_GetEnabled</div>
<div class="a" style="left:815px;top:349.8px;font-size:13.85px;color:#111;transform:scaleX(1.047);transform-origin:0 0">getVisible</div>
<div class="a" style="left:815px;top:370.8px;font-size:13.85px;color:#111;transform:scaleX(0.990);transform-origin:0 0">getLabel</div>
<div class="a" style="left:815px;top:391.8px;font-size:13.85px;color:#111;transform:scaleX(0.992);transform-origin:0 0">getImage</div>
<div class="a" style="left:815px;top:412.8px;font-size:13.85px;color:#111;transform:scaleX(1.026);transform-origin:0 0">getDescription</div>
<div class="a" style="left:815px;top:433.8px;font-size:13.85px;color:#111;transform:scaleX(0.961);transform-origin:0 0">getSize</div>
<div class="a" style="left:815px;top:454.8px;font-size:13.85px;color:#111;transform:scaleX(0.993);transform-origin:0 0">getShowImage</div>
<div class="a" style="left:815px;top:475.8px;font-size:13.85px;color:#111;transform:scaleX(0.985);transform-origin:0 0">getShowLabel</div>
<div class="a" style="left:815px;top:496.8px;font-size:13.85px;color:#111;transform:scaleX(1.013);transform-origin:0 0">getScreentip</div>
<div class="a" style="left:815px;top:517.8px;font-size:13.85px;color:#111;transform:scaleX(1.032);transform-origin:0 0">getSupertip</div>
<div class="a" style="left:815px;top:538.8px;font-size:13.85px;color:#111;transform:scaleX(1.034);transform-origin:0 0">getKeytip</div>
<div class="a" style="left:815px;top:559.8px;font-size:13.85px;color:#111;transform:scaleX(1.028);transform-origin:0 0">onAction</div>
<div class="a" style="left:1013.6px;top:559.8px;font-size:13.85px;color:#111;transform:scaleX(1.004);transform-origin:0 0">RibbonCredit_OnAction</div>
<div class="a" style="left:1174px;top:328px;width:1px;height:16px;background:#000"></div>
<div class="a" style="left:1435px;top:325px;width:18px;height:22px;background:linear-gradient(#c4c4c4,#a9a9a9);border:1px solid #7f7f7f"></div>
<svg style="left:0;top:0" width="1512" height="938">
 <rect x="1438.5" y="338.5" width="1.5" height="1.5" fill="#111"/><rect x="1442.5" y="338.5" width="1.5" height="1.5" fill="#111"/><rect x="1446.5" y="338.5" width="1.5" height="1.5" fill="#111"/>
 <defs><linearGradient id="xg" x1="0" y1="0" x2="0" y2="1"><stop offset="0" stop-color="#e9eef3"/><stop offset="1" stop-color="#b9cad8"/></linearGradient></defs>
 <rect x="1456.5" y="325.5" width="19" height="19" rx="3" fill="url(#xg)" stroke="#3a8fd0" stroke-width="1"/>
 <path d="M1458.5 342.5 q5-8 11.5-14.5" stroke="#d42020" stroke-width="2.4" fill="none" stroke-linecap="round"/>
 <path d="M1459 327.5 q6 6 11.5 14.5" stroke="#d42020" stroke-width="1.6" fill="none" stroke-linecap="round"/>
 <!-- scrollbar -->
 <path d="M1486 329.5 l4.5-6 l4.5 6z" fill="#6e6e6e"/>
 <rect x="1486" y="335" width="9" height="502" rx="4.5" fill="#707070"/>
 <path d="M1486 888.5 l4.5 6 l4.5-6z" fill="#6e6e6e"/>
 <!-- separator -->
 <path d="M803 786.5 H1470" stroke="#bdbdbd" stroke-width="1"/>
 <!-- proc icon -->
 <path d="M806.5 810.5 v-19 h20.5 v12" fill="#fafafa" stroke="#333" stroke-width="1"/>
 <path d="M806.5 793.5 h20.5" stroke="#333" stroke-width="1"/>
 <path d="M806.5 810.5 h3" stroke="#333" stroke-width="1"/>
 <g fill="#fff" stroke-width=".9">
  <path d="M819 796 l3.2 1.6 v3.6 l-3.2 1.6 l-3.2-1.6 v-3.6z M815.8 797.6 l3.2 1.6 l3.2-1.6 M819 799.2 v3.6" stroke="#a64bc7"/>
  <path d="M815 803.5 l3.2 1.6 v3.6 l-3.2 1.6 l-3.2-1.6 v-3.6z M811.8 805.1 l3.2 1.6 l3.2-1.6 M815 806.7 v3.6" stroke="#c08a3a"/>
  <path d="M823 803.5 l3.2 1.6 v3.6 l-3.2 1.6 l-3.2-1.6 v-3.6z M819.8 805.1 l3.2 1.6 l3.2-1.6 M823 806.7 v3.6" stroke="#2b8ad2"/>
 </g>
 <!-- info icon -->
 <rect x="807" y="822" width="20" height="20" rx="2.5" fill="#2196f3"/>
 <rect x="815.8" y="829.5" width="2.4" height="9" fill="#fff"/><rect x="815.8" y="825.8" width="2.4" height="2.4" fill="#fff"/>
</svg>
<div class="a" style="left:835.5px;top:793.5px;font-size:11.8px;color:#222;transform:scaleX(0.988);transform-origin:0 0">Public Sub RibbonCredit_GetEnabled(control As IRibbonControl, ByRef enabled)</div>
<div class="a" style="left:835.5px;top:816.6px;font-size:11.8px;color:#222;transform:scaleX(1.014);transform-origin:0 0">Procédure déterminant par une valeur booléenne l'état d'activation du contrôle.</div>
<div class="a" style="left:860px;top:831.4px;font-size:11.8px;color:#222;transform:scaleX(1.025);transform-origin:0 0">•&nbsp;true : état d'activation.</div>
<div class="a" style="left:860px;top:846.6px;font-size:11.8px;color:#222;transform:scaleX(0.991);transform-origin:0 0">•&nbsp;false : état de désactivation.</div>
<div class="a" style="left:835.5px;top:861.8px;font-size:11.8px;color:#222;transform:scaleX(1.001);transform-origin:0 0">La procédure getEnabled et l'attribut enabled s'excluent mutuellement.</div>
<!--/RIGHT-->
<!-- STATUS BAR -->
<div class="a" style="left:1px;top:915px;width:1511px;height:22px;background:#f4f4f4;border-top:1px solid #cbcbcb"></div>
<div class="a" style="left:9.6px;top:920.5px;font-size:11.5px;color:#333;transform:scaleX(0.997);transform-origin:0 0">Mode Formulaire</div>
<div class="a" style="left:1389px;top:921px;font-size:11.5px;color:#333;transform:scaleX(0.994);transform-origin:0 0">Verr. num.</div>
<div class="a" style="left:1461px;top:916px;width:40px;height:21px;background:#e0e0e0"></div>
<svg style="left:0;top:0" width="1512" height="938">
 <rect x="1474.5" y="920.5" width="14" height="12" fill="none" stroke="#333" stroke-width="1"/>
 <path d="M1474.5 923.5 h14 M1476.5 926.5 h4 M1476.5 929.5 h4" stroke="#333" stroke-width="1"/>
 <rect x="1482.5" y="925.5" width="4" height="2" fill="none" stroke="#333" stroke-width="1"/>
 <rect x="1482.5" y="928.5" width="4" height="2" fill="none" stroke="#333" stroke-width="1"/>
</svg>
</body></html>
